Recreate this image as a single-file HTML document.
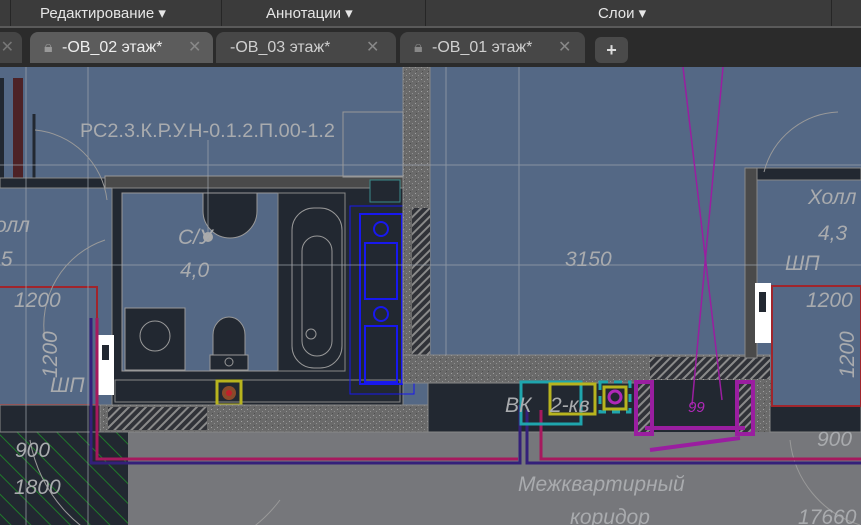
<!DOCTYPE html>
<html><head><meta charset="utf-8"><style>
html,body{margin:0;padding:0;width:861px;height:525px;overflow:hidden;background:#546885;font-family:"Liberation Sans",sans-serif}
#tb{position:absolute;left:0;top:0;width:861px;height:26px;background:#3b3b3b;border-bottom:2px solid #5a5a5a;color:#e6e6e6;font-size:15px}
#tb span{position:absolute;top:4px}
.sep{position:absolute;top:0;width:1px;height:26px;background:#262626}
#tabs{position:absolute;left:0;top:28px;width:861px;height:39px;background:#2b2b2b}
.tab{position:absolute;top:4px;height:31px;border-radius:8px 8px 0 0;color:#cfcfcf;font-size:16px;line-height:31px}
svg{position:absolute;left:0;top:67px;overflow:hidden}
</style></head><body>
<div id="tb">
<div class="sep" style="left:10px"></div><div class="sep" style="left:221px"></div><div class="sep" style="left:425px"></div><div class="sep" style="left:831px"></div>
<span style="left:40px">Редактирование ▾</span>
<span style="left:266px">Аннотации ▾</span>
<span style="left:598px">Слои ▾</span>
</div>
<div id="tabs">
<div class="tab" style="left:-20px;width:42px;background:#454545"><span style="position:absolute;right:8px;color:#777">✕</span></div>
<div class="tab" style="left:30px;width:183px;background:#5c5c5c;color:#eee"><span style="position:absolute;left:14px;color:#999">🔒︎</span><span style="position:absolute;left:32px">-OB_02 этаж*</span><span style="position:absolute;left:158px;color:#888">✕</span></div>
<div class="tab" style="left:216px;width:180px;background:#474747"><span style="position:absolute;left:14px">-OB_03 этаж*</span><span style="position:absolute;left:150px;color:#888">✕</span></div>
<div class="tab" style="left:400px;width:185px;background:#474747"><span style="position:absolute;left:14px;color:#888">🔒︎</span><span style="position:absolute;left:32px">-OB_01 этаж*</span><span style="position:absolute;left:158px;color:#888">✕</span></div>
<div class="tab" style="left:595px;width:33px;height:26px;top:9px;background:#4a4a4a;border-radius:6px;text-align:center;line-height:26px;color:#ddd;font-weight:bold;font-size:18px">+</div>
</div>
<svg width="861" height="458" viewBox="0 67 861 458" font-family="Liberation Sans, sans-serif" font-style="italic">
<defs>
<pattern id="sp" width="6" height="6" patternUnits="userSpaceOnUse"><rect width="6" height="6" fill="#6a6a6a"/><rect x="1" y="1" width="1" height="1" fill="#a0a0a0"/><rect x="4" y="3" width="1" height="1" fill="#909090"/><rect x="2" y="5" width="1" height="1" fill="#505050"/></pattern>
<pattern id="hh" width="6" height="6" patternUnits="userSpaceOnUse" patternTransform="rotate(45)"><rect width="6" height="6" fill="#303238"/><rect width="2" height="6" fill="#8a8a8a"/></pattern>
<pattern id="gh" width="14" height="14" patternUnits="userSpaceOnUse" patternTransform="rotate(-45)"><rect width="14" height="14" fill="#222831"/><rect width="1" height="14" fill="#1f7a2a"/></pattern>
</defs>
<rect x="0" y="67" width="861" height="458" fill="#546885"/>
<rect x="128" y="432" width="733" height="93" fill="#76777b"/>
<rect x="0" y="432" width="128" height="93" fill="url(#gh)"/>
<rect x="13" y="78" width="10" height="100" fill="#4d2226"/>
<rect x="0" y="78" width="4" height="100" fill="#222831"/>
<line x1="34" y1="114" x2="34" y2="178" stroke="#222831" stroke-width="3"/>
<rect x="0" y="178" width="112" height="10" fill="#222831" stroke="#888" />
<rect x="105" y="176" width="300" height="12" fill="#4a4a4a" stroke="#999"/>
<rect x="112" y="188" width="291" height="217" fill="#222831" stroke="#888"/>
<rect x="122" y="193" width="223" height="178" fill="#546885" stroke="#999"/>
<rect x="278" y="193" width="67" height="178" fill="#222831" stroke="#888"/>
<rect x="292" y="208" width="50" height="160" rx="22" fill="none" stroke="#999"/>
<rect x="302" y="236" width="30" height="120" rx="15" fill="none" stroke="#999"/>
<circle cx="311" cy="334" r="5" fill="none" stroke="#999"/>
<rect x="125" y="308" width="60" height="62" fill="#222831" stroke="#999"/>
<circle cx="155" cy="336" r="15" fill="none" stroke="#999"/>
<path d="M203 193 h54 v18 a27 27 0 0 1 -54 0z" fill="#222831" stroke="#999"/>
<circle cx="208" cy="237" r="5" fill="#aaa"/>
<path d="M213 360 v-25 a16 18 0 0 1 32 0 v25z" fill="#222831" stroke="#999"/>
<rect x="210" y="355" width="38" height="15" fill="#222831" stroke="#999"/>
<circle cx="229" cy="362" r="4" fill="none" stroke="#999"/>
<rect x="115" y="380" width="285" height="22" fill="#222831" stroke="#888"/>
<rect x="217" y="381" width="24" height="24" fill="none" stroke="#b8b41e" stroke-width="3"/>
<circle cx="229" cy="393" r="7" fill="#8a4a2a"/><circle cx="229" cy="393" r="3" fill="#c0202a"/>
<g fill="none" stroke="#1818ee" stroke-width="2">
<rect x="350" y="206" width="64" height="188" stroke-width="1"/>
<rect x="360" y="214" width="42" height="170"/>
<rect x="365" y="243" width="32" height="56"/>
<rect x="365" y="326" width="32" height="56"/>
<circle cx="381" cy="229" r="7"/><circle cx="381" cy="314" r="7"/>
</g>
<rect x="370" y="180" width="30" height="22" fill="#222831" stroke="#3a8a8a"/>
<rect x="403" y="67" width="27" height="290" fill="url(#sp)" stroke="#888"/>
<rect x="412" y="208" width="18" height="152" fill="url(#hh)"/>
<rect x="100" y="405" width="330" height="27" fill="url(#sp)" stroke="#888"/>
<rect x="108" y="407" width="99" height="23" fill="url(#hh)"/>
<rect x="403" y="355" width="367" height="28" fill="url(#sp)" stroke="#888"/>
<rect x="650" y="357" width="120" height="22" fill="url(#hh)"/>
<rect x="428" y="383" width="215" height="49" fill="#222831" stroke="#888"/>
<rect x="640" y="380" width="110" height="52" fill="#222831"/>
<rect x="743" y="380" width="30" height="52" fill="url(#sp)"/>
<rect x="770" y="405" width="91" height="27" fill="#222831" stroke="#888"/>
<rect x="745" y="168" width="12" height="190" fill="#4a4a4a" stroke="#888"/>
<rect x="757" y="168" width="104" height="12" fill="#222831" stroke="#888"/>
<rect x="772" y="286" width="89" height="120" fill="#546885" stroke="#a0252c" stroke-width="2"/>
<rect x="755" y="283" width="16" height="60" fill="#fff"/><rect x="759" y="292" width="7" height="20" fill="#222831"/>
<path d="M0 287 H97 V318" fill="none" stroke="#a0252c" stroke-width="2"/>
<path d="M0 405 H97" fill="none" stroke="#a0252c" stroke-width="2"/>
<rect x="98" y="335" width="16" height="60" fill="#fff"/><rect x="102" y="345" width="7" height="15" fill="#222831"/>
<rect x="0" y="405" width="100" height="27" fill="#222831" stroke="#888"/>
<g stroke="#9ea4ad" stroke-width="1" opacity=".7">
<line x1="0" y1="165" x2="861" y2="165"/><line x1="0" y1="265" x2="861" y2="265"/>
<line x1="88" y1="67" x2="88" y2="525"/><line x1="26" y1="67" x2="26" y2="525"/>
<line x1="446" y1="67" x2="446" y2="355"/><line x1="519" y1="67" x2="519" y2="355"/>
<line x1="208" y1="140" x2="208" y2="240"/>
</g>
<path d="M35 130 a80 80 0 0 1 72 70" fill="none" stroke="#999"/>
<path d="M45 340 a90 90 0 0 1 60 -100" fill="none" stroke="#999"/>
<path d="M838 112 a80 80 0 0 0 -74 60" fill="none" stroke="#999"/>
<path d="M30 440 a140 140 0 0 0 250 60" fill="none" stroke="#999"/>
<path d="M790 440 a100 100 0 0 0 70 85" fill="none" stroke="#999"/>
<rect x="343" y="112" width="60" height="65" fill="none" stroke="#999"/>
<path d="M91 318 V463 H520 V405" fill="none" stroke="#34207a" stroke-width="3"/>
<path d="M97 318 V459 H518" fill="none" stroke="#a6195e" stroke-width="3"/>
<path d="M541 410 V459 H861" fill="none" stroke="#a6195e" stroke-width="3"/>
<path d="M527 410 V463 H861" fill="none" stroke="#34207a" stroke-width="3"/>
<g stroke="#9a1ea0" stroke-width="1.5"><line x1="683" y1="67" x2="722" y2="400"/><line x1="723" y1="67" x2="692" y2="405"/></g>
<g fill="none" stroke="#9a1ea0" stroke-width="4">
<rect x="636" y="382" width="16" height="52" fill="url(#hh)"/><rect x="737" y="382" width="16" height="52" fill="url(#hh)"/>
<path d="M645 428 H745"/><path d="M650 450 L740 438"/>
</g>
<rect x="521" y="382" width="60" height="42" fill="none" stroke="#1fa5ad" stroke-width="3"/>
<rect x="550" y="384" width="45" height="30" fill="none" stroke="#b8b41e" stroke-width="3"/>
<rect x="600" y="382" width="30" height="30" fill="none" stroke="#1fa5ad" stroke-width="3" stroke-dasharray="8 6"/>
<rect x="604" y="387" width="22" height="22" fill="none" stroke="#b8b41e" stroke-width="3"/>
<circle cx="615" cy="397" r="6" fill="none" stroke="#b028b8" stroke-width="3"/>
<g fill="#a9abae" font-style="normal" font-size="19">
<text x="80" y="137" textLength="255" lengthAdjust="spacingAndGlyphs">РС2.3.К.Р.У.Н-0.1.2.П.00-1.2</text>
</g>
<g fill="#a9abae" font-size="21">
<text x="178" y="244">С/У</text><text x="180" y="277">4,0</text>
<text x="565" y="266">3150</text>
<text x="808" y="204">Холл</text><text x="818" y="240">4,3</text>
<text x="785" y="270">ШП</text><text x="806" y="307">1200</text>
<text x="-5" y="232">олл</text><text x="-5" y="266">,5</text>
<text x="14" y="307">1200</text>
<text x="50" y="392">ШП</text>
<text x="15" y="457">900</text><text x="14" y="494">1800</text>
<text x="817" y="446">900</text>
<text x="798" y="524">17660</text>
<text x="518" y="491">Межквартирный</text>
<text x="570" y="524">коридор</text>
<text x="505" y="412">ВК</text><text x="550" y="412">2-кв</text>
<text transform="translate(57 378) rotate(-90)">1200</text>
<text transform="translate(854 378) rotate(-90)">1200</text>
</g>
<text x="688" y="412" fill="#b028b8" font-size="15">99</text>
</svg>
</body></html>
